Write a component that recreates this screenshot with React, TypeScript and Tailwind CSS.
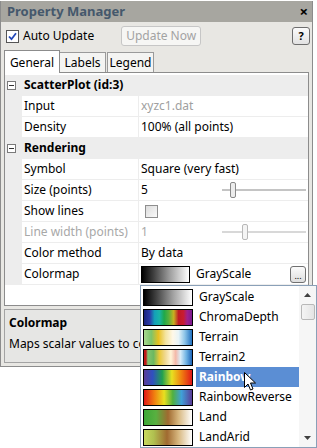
import React from 'react';

const font = { fontFamily: '"Noto Sans", "Liberation Sans", sans-serif' };

// colormap gradients, used both in the grid and in the dropdown
const maps: { name: string; bg: string }[] = [
  { name: 'GrayScale', bg: 'bg-[linear-gradient(to_right,#000000,#404040_25%,#a0a0a0_60%,#ffffff)]' },
  {
    name: 'ChromaDepth',
    bg: 'bg-[linear-gradient(to_right,#1a237e_0%,#2a3aa8_12%,#14a0b8_22%,#18b4a8_32%,#1fa84a_42%,#5cb03a_52%,#c8b020_62%,#c01a24_72%,#c81c30_82%,#a0208c_90%,#7a1a90_100%)]',
  },
  {
    name: 'Terrain',
    bg: 'bg-[linear-gradient(to_right,#a8d890_0%,#7cc46c_15%,#e8c020_30%,#f4e4a0_45%,#fff8e8_60%,#e8f4f8_72%,#8cc4e8_85%,#2070c0_100%)]',
  },
  {
    name: 'Terrain2',
    bg: 'bg-[linear-gradient(to_right,#c01818_0%,#c01818_4%,#80c470_8%,#6cb860_20%,#e8c838_32%,#f0d890_44%,#fff4d8_56%,#f4b8a8_66%,#d8ecf8_76%,#70b4e4_88%,#1c64b8_100%)]',
  },
  {
    name: 'Rainbow',
    bg: 'bg-[linear-gradient(to_right,#5a3c98_0%,#3050c0_18%,#20a050_38%,#e8e020_58%,#f08010_78%,#e01818_100%)]',
  },
  {
    name: 'RainbowReverse',
    bg: 'bg-[linear-gradient(to_right,#e01818_0%,#f08010_22%,#e8e020_42%,#50b040_60%,#40a0d8_78%,#5a3c98_100%)]',
  },
  {
    name: 'Land',
    bg: 'bg-[linear-gradient(to_right,#3ca838_0%,#58b040_25%,#a06a30_50%,#d8b880_72%,#ffffff_100%)]',
  },
  {
    name: 'LandArid',
    bg: 'bg-[linear-gradient(to_right,#c8d860_0%,#b0c050_20%,#a06a30_48%,#d8b880_72%,#ffffff_100%)]',
  },
];

function Header({ title }: { title: string }) {
  return (
    <div className="flex h-[21px] items-center bg-[#ededed] pb-px">
      <div className="ml-[2px] flex h-[9px] w-[9px] items-center justify-center border border-[#7a7a7a] bg-white">
        <div className="h-px w-[5px] bg-[#333]" />
      </div>
      <span className="ml-[8px] text-[12px] font-bold text-black">{title}</span>
    </div>
  );
}

function Row({
  label,
  children,
  dim = false,
}: {
  label: string;
  children?: React.ReactNode;
  dim?: boolean;
}) {
  return (
    <div className="flex h-[21px] bg-[#ededed] pb-px">
      <div className="w-[17px] shrink-0" />
      <div
        className={`flex w-[116px] shrink-0 items-center bg-white pl-[2px] text-[12px] ${
          dim ? 'text-[#a8a8a8]' : 'text-black'
        }`}
      >
        {label}
      </div>
      <div className="ml-px flex flex-1 items-center bg-white pl-[2px] pr-[2px] text-[12px] text-black">
        {children}
      </div>
    </div>
  );
}

function Slider({ pos, dim = false }: { pos: number; dim?: boolean }) {
  return (
    <div className="relative ml-auto h-[16px] w-[84px]">
      <div className={`absolute left-0 right-0 top-[7px] h-[2px] ${dim ? 'bg-[#d8d8d8]' : 'bg-[#c4c4c4]'}`} />
      <div
        className={`absolute top-0 h-[16px] w-[6px] rounded-[2px] border ${
          dim ? 'border-[#b8b8b8] bg-[#f4f4f4]' : 'border-[#8a8a8a] bg-[#ececec]'
        }`}
        style={{ left: pos }}
      />
    </div>
  );
}

function Cursor() {
  return (
    <svg width="13" height="20" viewBox="0 0 13 20" className="absolute left-[244px] top-[372px]">
      <path
        d="M0.5 0.5 L0.5 15.5 L4 12 L6.5 18 L9 17 L6.5 11 L11.5 11 Z"
        fill="#ffffff"
        stroke="#000000"
        strokeWidth="1"
        strokeLinejoin="round"
      />
    </svg>
  );
}

export default function App() {
  return (
    <div className="relative h-[448px] w-[317px] overflow-hidden bg-white pt-px" style={font}>
      {/* window */}
      <div className="flex h-[366px] w-[313px] flex-col border-x border-b border-[#8c8c8c] bg-[#e8e7e3]">
        {/* title bar */}
        <div className="flex h-[21px] shrink-0 items-center justify-between bg-[#a7a6a0] pl-[6px] pr-[4px]">
          <span className="text-[13px] font-bold text-[#45586c]">Property Manager</span>
          <span className="text-[15px] font-bold leading-none text-black">×</span>
        </div>

        {/* toolbar */}
        <div className="flex h-[26px] shrink-0 items-center pl-[5px] pr-[2px] pt-[2px]">
          <div className="flex h-[13px] w-[13px] items-center justify-center border border-[#555] bg-white">
            <svg width="9" height="9" viewBox="0 0 9 9">
              <path d="M1 4.5 L3.5 7.2 L8 1.2" fill="none" stroke="#2247b8" strokeWidth="1.8" />
            </svg>
          </div>
          <span className="ml-[4px] text-[12px] text-black">Auto Update</span>
          <div className="ml-[27px] flex h-[20px] w-[80px] items-center justify-center rounded-[3px] border border-[#c6c6c6] bg-[#f6f6f4] text-[12px] text-[#a3a3a3]">
            Update Now
          </div>
          <div className="ml-auto flex h-[18px] w-[18px] items-center justify-center rounded-[3px] border border-[#6e6e6e] bg-[linear-gradient(#fbfbfb,#e2e2e2)] text-[11px] font-bold text-black">
            ?
          </div>
        </div>

        {/* tabs */}
        <div className="flex h-[24px] shrink-0 items-end pl-[3px]">
          <div className="relative z-10 -mb-px flex h-[23px] w-[56px] items-center justify-center border border-b-0 border-[#8c8c8c] bg-white pt-[1px] text-[12px] text-black">
            General
          </div>
          <div className="flex h-[20px] w-[46px] items-center justify-center border border-l-0 border-b-0 border-[#9a9a9a] bg-[#f4f4f2] pt-[1px] text-[12px] text-black">
            Labels
          </div>
          <div className="ml-px flex h-[20px] w-[47px] items-center justify-center border border-b-0 border-[#9a9a9a] bg-[#f4f4f2] pt-[1px] text-[12px] text-black">
            Legend
          </div>
        </div>

        {/* tab panel with property grid */}
        <div className="mx-[3px] flex h-[234px] shrink-0 flex-col border border-[#8c8c8c] bg-white pt-[2px]">
          <div className="flex flex-col">
            <Header title="ScatterPlot (id:3)" />
            <Row label="Input">
              <span className="text-[#a0a0a0]">xyzc1.dat</span>
            </Row>
            <Row label="Density">100% (all points)</Row>
            <Header title="Rendering" />
            <Row label="Symbol">Square (very fast)</Row>
            <Row label="Size (points)">
              <span>5</span>
              <Slider pos={8} />
            </Row>
            <Row label="Show lines">
              <div className="ml-[4px] h-[13px] w-[13px] border border-[#8e8e8e] bg-[linear-gradient(135deg,#dcdcdc,#fafafa)]" />
            </Row>
            <Row label="Line width (points)" dim>
              <span className="text-[#a8a8a8]">1</span>
              <Slider pos={20} dim />
            </Row>
            <Row label="Color method">By data</Row>
            <Row label="Colormap">
              <div className={`h-[17px] w-[49px] border border-black ${maps[0].bg}`} />
              <span className="ml-[6px]">GrayScale</span>
              <div className="ml-auto flex h-[17px] w-[16px] items-end justify-center rounded-[3px] border border-[#707070] bg-[linear-gradient(#fbfbfb,#dedede)] pb-[2px] text-[9px] leading-none text-black">
                ...
              </div>
            </Row>
          </div>
        </div>

        {/* description */}
        <div className="mx-[3px] mt-[3px] flex h-[54px] shrink-0 flex-col border border-[#a3a3a3] bg-[#e6e6e4] px-[4px] pt-[4px]">
          <span className="text-[12px] font-bold leading-[18px] text-black">Colormap</span>
          <span className="mt-[2px] text-[12px] leading-[20px] text-black">Maps scalar values to colors</span>
        </div>
      </div>

      {/* colormap dropdown */}
      <div className="absolute left-[140px] top-[285px] flex h-[163px] w-[177px] border border-[#8aa0b8] bg-white">
        <div className="flex flex-1 flex-col pt-px">
          {maps.map((m) => {
            const sel = m.name === 'Rainbow';
            return (
              <div key={m.name} className="flex h-[20px] shrink-0 items-center">
                <div className="flex h-full w-[55px] shrink-0 items-center pl-[2px]">
                  <div className={`h-[17px] w-[50px] border border-black ${m.bg}`} />
                </div>
                <div
                  className={`flex h-full flex-1 items-center pl-[3px] text-[12px] ${
                    sel ? 'bg-[#5b8ed4] font-bold text-white' : 'text-black'
                  }`}
                >
                  {m.name}
                </div>
              </div>
            );
          })}
        </div>
        {/* scrollbar */}
        <div className="flex w-[17px] shrink-0 flex-col items-center bg-[#f6f6f6]">
          <div className="flex h-[18px] items-center justify-center">
            <svg width="7" height="4" viewBox="0 0 7 4">
              <path d="M0 4 L3.5 0 L7 4 Z" fill="#404040" />
            </svg>
          </div>
          <div className="h-[16px] w-[14px] rounded-[2px] border border-[#b8b8b8] bg-[linear-gradient(to_right,#f4f4f4,#e4e4e4)]" />
          <div className="mt-auto flex h-[18px] items-center justify-center">
            <svg width="7" height="4" viewBox="0 0 7 4">
              <path d="M0 0 L3.5 4 L7 0 Z" fill="#404040" />
            </svg>
          </div>
        </div>
      </div>

      <Cursor />
    </div>
  );
}
